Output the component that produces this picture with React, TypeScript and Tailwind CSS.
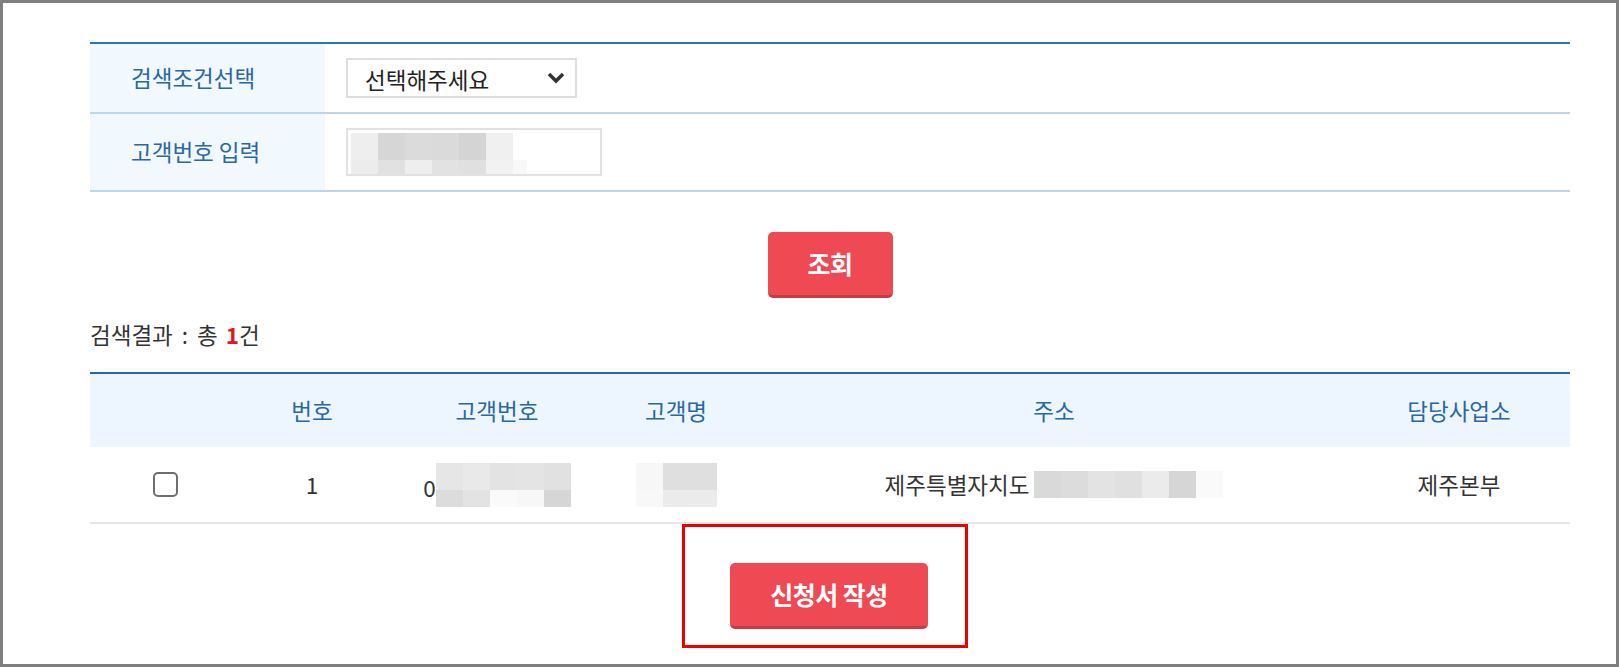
const FONT = "font-['Noto_Sans_CJK_KR','Noto_Sans',sans-serif]";

type Cell = { w: number; c: string };

// pixelated (blurred-out) personal data
function Mosaic({ rows }: { rows: { h: number; cells: Cell[] }[] }) {
    return (
        <div className="flex flex-col">
            {rows.map((r, i) => (
                <div key={i} className="flex" style={{ height: r.h }}>
                    {r.cells.map((c, j) => (
                        <div key={j} style={{ width: c.w, background: c.c }} />
                    ))}
                </div>
            ))}
        </div>
    );
}

function RedButton({ label, width }: { label: string; width: string }) {
    return (
        <button
            className={`${width} h-[66px] rounded-[5px] bg-[#ef4953] border-b-[3px] border-[#c93a43] text-white text-[25px] font-bold tracking-[-0.5px] flex items-center justify-center`}
        >
            {label}
        </button>
    );
}

export default function App() {
    return (
        <div className={`w-[1619px] h-[667px] border-[3px] border-[#7f7f7f] bg-white ${FONT} overflow-hidden`}>
            <div className="pl-[87px] pr-[46px] pt-[39px]">
                {/* Search form */}
                <div className="border-t-2 border-[#2b78b6]">
                    <div className="grid grid-cols-[235px_1fr] h-[70px] border-b-2 border-[#bdd6e7]">
                        <div className="bg-[#f1f8fe] flex items-center pl-[41px] text-[22.5px] text-[#2a67a3]">
                            검색조건선택
                        </div>
                        <div className="flex items-center pl-[21px]">
                            <div className="w-[231px] h-[40px] border-2 border-[#dedede] flex items-center justify-between pl-[17px] pr-[10px]">
                                <span className="text-[22.5px] text-[#222] pt-[4px]">선택해주세요</span>
                                <svg width="18" height="12" viewBox="0 0 18 12">
                                    <polyline points="2,2 9,9 16,2" fill="none" stroke="#333" strokeWidth="3.5" />
                                </svg>
                            </div>
                        </div>
                    </div>
                    <div className="grid grid-cols-[235px_1fr] h-[78px] border-b-2 border-[#bdd6e7]">
                        <div className="bg-[#f1f8fe] flex items-center pl-[41px] text-[22.5px] text-[#2a67a3]">
                            고객번호 입력
                        </div>
                        <div className="flex items-center pl-[21px]">
                            <div className="w-[256px] h-[48px] border-2 border-[#e2e2e2] flex items-end pl-[3px]">
                                <Mosaic
                                    rows={[
                                        {
                                            h: 27,
                                            cells: [
                                                { w: 27, c: "#eeeeee" },
                                                { w: 27, c: "#d6d6d6" },
                                                { w: 27, c: "#dbdbdb" },
                                                { w: 27, c: "#dadada" },
                                                { w: 27, c: "#d4d4d4" },
                                                { w: 27, c: "#f0f0f0" },
                                            ],
                                        },
                                        {
                                            h: 14,
                                            cells: [
                                                { w: 27, c: "#ececec" },
                                                { w: 27, c: "#e1e1e1" },
                                                { w: 27, c: "#eeeeee" },
                                                { w: 27, c: "#e2e2e2" },
                                                { w: 27, c: "#e0e0e0" },
                                                { w: 27, c: "#f2f2f2" },
                                                { w: 14, c: "#f8f8f8" },
                                            ],
                                        },
                                    ]}
                                />
                            </div>
                        </div>
                    </div>
                </div>

                <div className="flex justify-center mt-[40px]">
                    <RedButton label="조회" width="w-[125px]" />
                </div>

                {/* Result caption */}
                <div className="mt-[25px] h-[24px] flex items-center text-[22.5px] text-[#333]">
                    <span>검색결과</span>
                    <span className="ml-[9px]">:</span>
                    <span className="ml-[9px]">총</span>
                    <span className="ml-[8px] text-[#e3161c] font-bold">1</span>
                    <span>건</span>
                </div>

                {/* Result table */}
                <div className="mt-[25px] border-t-2 border-[#2468ad]">
                    <div className="grid grid-cols-[150px_144px_226px_132px_624px_1fr] h-[73px] bg-[#edf6fe] items-center text-center text-[22.5px] text-[#2a67a3]">
                        <div />
                        <div>번호</div>
                        <div>고객번호</div>
                        <div>고객명</div>
                        <div>주소</div>
                        <div className="pr-[18px]">담당사업소</div>
                    </div>
                    <div className="grid grid-cols-[150px_144px_226px_132px_624px_1fr] h-[77px] border-b-2 border-[#e6e6e6] items-center text-center text-[22.5px] text-[#333]">
                        <div className="flex justify-center">
                            <div className="w-[25px] h-[25px] rounded-[5px] border-2 border-[#6e6e6e] bg-white" />
                        </div>
                        <div>1</div>
                        <div className="flex justify-center items-center">
                            <span className="pt-[6px]">0</span>
                            <Mosaic
                                rows={[
                                    {
                                        h: 27,
                                        cells: [
                                            { w: 27, c: "#e6e6e6" },
                                            { w: 27, c: "#e9e9e9" },
                                            { w: 27, c: "#e3e3e3" },
                                            { w: 27, c: "#e4e4e4" },
                                            { w: 27, c: "#e1e1e1" },
                                        ],
                                    },
                                    {
                                        h: 17,
                                        cells: [
                                            { w: 27, c: "#dcdcdc" },
                                            { w: 27, c: "#e3e3e3" },
                                            { w: 27, c: "#fafafa" },
                                            { w: 27, c: "#f7f7f7" },
                                            { w: 27, c: "#d6d6d6" },
                                        ],
                                    },
                                ]}
                            />
                        </div>
                        <div className="flex justify-center">
                            <Mosaic
                                rows={[
                                    {
                                        h: 27,
                                        cells: [
                                            { w: 27, c: "#f7f7f7" },
                                            { w: 54, c: "#dfdfdf" },
                                        ],
                                    },
                                    {
                                        h: 17,
                                        cells: [
                                            { w: 27, c: "#f8f8f8" },
                                            { w: 54, c: "#ebebeb" },
                                        ],
                                    },
                                ]}
                            />
                        </div>
                        <div className="flex justify-center items-center gap-[5px]">
                            <span>제주특별자치도</span>
                            <Mosaic
                                rows={[
                                    {
                                        h: 27,
                                        cells: [
                                            { w: 27, c: "#d9d9d9" },
                                            { w: 27, c: "#dcdcdc" },
                                            { w: 27, c: "#e3e3e3" },
                                            { w: 27, c: "#e0e0e0" },
                                            { w: 27, c: "#ebebeb" },
                                            { w: 27, c: "#d6d6d6" },
                                            { w: 27, c: "#fafafa" },
                                        ],
                                    },
                                ]}
                            />
                        </div>
                        <div className="pr-[18px]">제주본부</div>
                    </div>
                </div>

                <div className="flex justify-center">
                    <div className="mr-[10px] border-[3px] border-[#ec0000] pt-[36px] pb-[16px] pl-[45px] pr-[37px]">
                        <RedButton label="신청서 작성" width="w-[198px]" />
                    </div>
                </div>
            </div>
        </div>
    );
}
